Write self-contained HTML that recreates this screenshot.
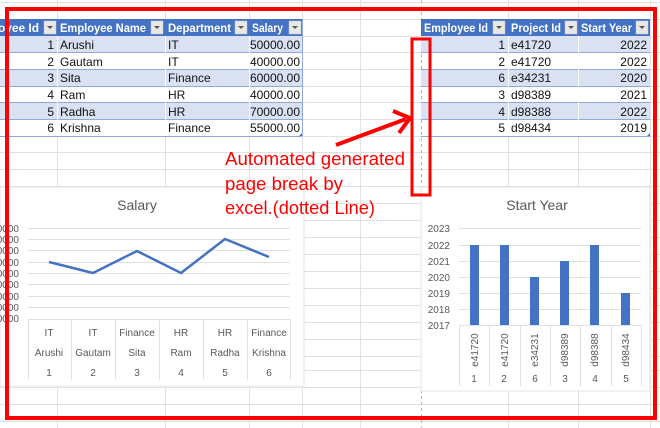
<!DOCTYPE html>
<html><head><meta charset="utf-8"><style>
html,body{margin:0;padding:0;background:#fff;width:660px;height:428px;overflow:hidden}
svg{display:block;font-family:"Liberation Sans",sans-serif}
</style></head><body>
<svg width="660" height="428" viewBox="0 0 660 428" xmlns="http://www.w3.org/2000/svg">
<rect width="660" height="428" fill="#fff"/>
<g stroke="#e1e1e1" stroke-width="1">
<line x1="0" y1="2.5" x2="660" y2="2.5"/>
<line x1="0" y1="19.5" x2="660" y2="19.5"/>
<line x1="0" y1="36.5" x2="660" y2="36.5"/>
<line x1="0" y1="52.5" x2="660" y2="52.5"/>
<line x1="0" y1="69.5" x2="660" y2="69.5"/>
<line x1="0" y1="86.5" x2="660" y2="86.5"/>
<line x1="0" y1="102.5" x2="660" y2="102.5"/>
<line x1="0" y1="119.5" x2="660" y2="119.5"/>
<line x1="0" y1="136.5" x2="660" y2="136.5"/>
<line x1="0" y1="152.5" x2="660" y2="152.5"/>
<line x1="0" y1="169.5" x2="660" y2="169.5"/>
<line x1="0" y1="186.5" x2="660" y2="186.5"/>
<line x1="0" y1="203.5" x2="660" y2="203.5"/>
<line x1="0" y1="220.5" x2="660" y2="220.5"/>
<line x1="0" y1="237.5" x2="660" y2="237.5"/>
<line x1="0" y1="254.5" x2="660" y2="254.5"/>
<line x1="0" y1="271.5" x2="660" y2="271.5"/>
<line x1="0" y1="288.5" x2="660" y2="288.5"/>
<line x1="0" y1="305.5" x2="660" y2="305.5"/>
<line x1="0" y1="322.5" x2="660" y2="322.5"/>
<line x1="0" y1="339.5" x2="660" y2="339.5"/>
<line x1="0" y1="356.5" x2="660" y2="356.5"/>
<line x1="0" y1="370.5" x2="660" y2="370.5"/>
<line x1="0" y1="387.5" x2="660" y2="387.5"/>
<line x1="0" y1="404.5" x2="660" y2="404.5"/>
<line x1="0" y1="421.5" x2="660" y2="421.5"/>
<line x1="57.5" y1="0" x2="57.5" y2="428"/>
<line x1="165.5" y1="0" x2="165.5" y2="428"/>
<line x1="249.5" y1="0" x2="249.5" y2="428"/>
<line x1="302.5" y1="0" x2="302.5" y2="428"/>
<line x1="360.5" y1="0" x2="360.5" y2="428"/>
<line x1="508.5" y1="0" x2="508.5" y2="428"/>
<line x1="578.5" y1="0" x2="578.5" y2="428"/>
<line x1="650.5" y1="0" x2="650.5" y2="428"/>
</g>
<line x1="421.5" y1="0" x2="421.5" y2="428" stroke="#b8b8b8" stroke-dasharray="3,3"/>

<rect x="0" y="19" width="302" height="17" fill="#4472C4"/>
<g fill="#D9E1F2"><rect x="0" y="36" width="302" height="16"/><rect x="0" y="69" width="302" height="17"/><rect x="0" y="102" width="302" height="17"/></g>
<g stroke="#8EA9DB" stroke-width="1"><line x1="0" y1="52.5" x2="302" y2="52.5"/><line x1="0" y1="69.5" x2="302" y2="69.5"/><line x1="0" y1="86.5" x2="302" y2="86.5"/><line x1="0" y1="102.5" x2="302" y2="102.5"/><line x1="0" y1="119.5" x2="302" y2="119.5"/><line x1="0" y1="136.5" x2="302" y2="136.5"/><line x1="302.5" y1="19" x2="302.5" y2="136"/></g>
<g stroke="#fff" stroke-width="1"><line x1="57.5" y1="36" x2="57.5" y2="136"/><line x1="165.5" y1="36" x2="165.5" y2="136"/><line x1="249.5" y1="36" x2="249.5" y2="136"/></g>
<g font-size="12" font-weight="bold" fill="#fff">
<text x="-2" y="32" textLength="41" lengthAdjust="spacingAndGlyphs">oyee Id</text><text x="60" y="32" textLength="86" lengthAdjust="spacingAndGlyphs">Employee Name</text><text x="168" y="32" textLength="63" lengthAdjust="spacingAndGlyphs">Department</text><text x="252" y="32" textLength="31" lengthAdjust="spacingAndGlyphs">Salary</text></g>
<g fill="#e8e8e8" stroke="#c8c8c8" stroke-width="0.5"><rect x="44" y="21" width="12" height="13"/><rect x="151" y="21" width="12" height="13"/><rect x="235" y="21" width="12" height="13"/><rect x="289" y="21" width="12" height="13"/></g>
<g fill="#555"><path d="M47 26h6l-3 3z"/><path d="M154 26h6l-3 3z"/><path d="M238 26h6l-3 3z"/><path d="M292 26h6l-3 3z"/></g>
<g font-size="12" fill="#111">
<text x="54" y="49" text-anchor="end">1</text><text x="60" y="49">Arushi</text><text x="168" y="49">IT</text><text x="300" y="49" text-anchor="end">50000.00</text>
<text x="54" y="66" text-anchor="end">2</text><text x="60" y="66">Gautam</text><text x="168" y="66">IT</text><text x="300" y="66" text-anchor="end">40000.00</text>
<text x="54" y="82" text-anchor="end">3</text><text x="60" y="82">Sita</text><text x="168" y="82">Finance</text><text x="300" y="82" text-anchor="end">60000.00</text>
<text x="54" y="99" text-anchor="end">4</text><text x="60" y="99">Ram</text><text x="168" y="99">HR</text><text x="300" y="99" text-anchor="end">40000.00</text>
<text x="54" y="116" text-anchor="end">5</text><text x="60" y="116">Radha</text><text x="168" y="116">HR</text><text x="300" y="116" text-anchor="end">70000.00</text>
<text x="54" y="132" text-anchor="end">6</text><text x="60" y="132">Krishna</text><text x="168" y="132">Finance</text><text x="300" y="132" text-anchor="end">55000.00</text>
</g>
<path d="M299 136h3v-3z" fill="#4472C4"/>

<rect x="421" y="19" width="229" height="17" fill="#4472C4"/>
<g fill="#D9E1F2"><rect x="421" y="36" width="229" height="16"/><rect x="421" y="69" width="229" height="17"/><rect x="421" y="102" width="229" height="17"/></g>
<g stroke="#8EA9DB" stroke-width="1"><line x1="421" y1="52.5" x2="650" y2="52.5"/><line x1="421" y1="69.5" x2="650" y2="69.5"/><line x1="421" y1="86.5" x2="650" y2="86.5"/><line x1="421" y1="102.5" x2="650" y2="102.5"/><line x1="421" y1="119.5" x2="650" y2="119.5"/><line x1="421" y1="136.5" x2="650" y2="136.5"/></g>
<g stroke="#fff"><line x1="508.5" y1="36" x2="508.5" y2="136"/><line x1="578.5" y1="36" x2="578.5" y2="136"/></g>
<g font-size="12" font-weight="bold" fill="#fff"><text x="424" y="32" textLength="64" lengthAdjust="spacingAndGlyphs">Employee Id</text><text x="511" y="32" textLength="50" lengthAdjust="spacingAndGlyphs">Project Id</text><text x="581" y="32" textLength="51" lengthAdjust="spacingAndGlyphs">Start Year</text></g>
<g fill="#e8e8e8" stroke="#c8c8c8" stroke-width="0.5"><rect x="493" y="21" width="12" height="13"/><rect x="565" y="21" width="12" height="13"/><rect x="636" y="21" width="12" height="13"/></g>
<g fill="#555"><path d="M496 26h6l-3 3z"/><path d="M568 26h6l-3 3z"/><path d="M639 26h6l-3 3z"/></g>
<g font-size="12" fill="#111">
<text x="505" y="49" text-anchor="end">1</text><text x="511" y="49">e41720</text><text x="647" y="49" text-anchor="end">2022</text>
<text x="505" y="66" text-anchor="end">2</text><text x="511" y="66">e41720</text><text x="647" y="66" text-anchor="end">2022</text>
<text x="505" y="82" text-anchor="end">6</text><text x="511" y="82">e34231</text><text x="647" y="82" text-anchor="end">2020</text>
<text x="505" y="99" text-anchor="end">3</text><text x="511" y="99">d98389</text><text x="647" y="99" text-anchor="end">2021</text>
<text x="505" y="116" text-anchor="end">4</text><text x="511" y="116">d98388</text><text x="647" y="116" text-anchor="end">2022</text>
<text x="505" y="132" text-anchor="end">5</text><text x="511" y="132">d98434</text><text x="647" y="132" text-anchor="end">2019</text>
</g>
<path d="M647 136h3v-3z" fill="#4472C4"/>

<rect x="0" y="187" width="304" height="199" fill="#fff" stroke="#e4e4e4"/>
<text x="137" y="210" font-size="14" fill="#595959" text-anchor="middle">Salary</text>
<g stroke="#e0e0e0"><line x1="28" y1="228.5" x2="290" y2="228.5"/><line x1="28" y1="239.5" x2="290" y2="239.5"/><line x1="28" y1="250.5" x2="290" y2="250.5"/><line x1="28" y1="262.5" x2="290" y2="262.5"/><line x1="28" y1="273.5" x2="290" y2="273.5"/><line x1="28" y1="284.5" x2="290" y2="284.5"/><line x1="28" y1="296.5" x2="290" y2="296.5"/><line x1="28" y1="307.5" x2="290" y2="307.5"/>
<line x1="28" y1="319.5" x2="290" y2="319.5"/>
<line x1="28.5" y1="319" x2="28.5" y2="380"/><line x1="71.5" y1="319" x2="71.5" y2="380"/><line x1="115.5" y1="319" x2="115.5" y2="380"/><line x1="159.5" y1="319" x2="159.5" y2="380"/><line x1="203.5" y1="319" x2="203.5" y2="380"/><line x1="247.5" y1="319" x2="247.5" y2="380"/><line x1="290.5" y1="319" x2="290.5" y2="380"/></g>
<g font-size="10" fill="#595959" text-anchor="end"><text x="19" y="232">0000</text><text x="19" y="243">0000</text><text x="19" y="254">0000</text><text x="19" y="266">0000</text><text x="19" y="277">0000</text><text x="19" y="288">0000</text><text x="19" y="300">0000</text><text x="19" y="311">0000</text><text x="19" y="322">0000</text></g>
<polyline points="49,262 93,273 137,251 181,273 225,239 269,257" fill="none" stroke="#4472C4" stroke-width="2.5" stroke-linejoin="round"/>
<g font-size="10" fill="#595959" text-anchor="middle">
<text x="49" y="336">IT</text><text x="93" y="336">IT</text><text x="137" y="336">Finance</text><text x="181" y="336">HR</text><text x="225" y="336">HR</text><text x="269" y="336">Finance</text>
<text x="49" y="356">Arushi</text><text x="93" y="356">Gautam</text><text x="137" y="356">Sita</text><text x="181" y="356">Ram</text><text x="225" y="356">Radha</text><text x="269" y="356">Krishna</text>
<text x="49" y="376">1</text><text x="93" y="376">2</text><text x="137" y="376">3</text><text x="181" y="376">4</text><text x="225" y="376">5</text><text x="269" y="376">6</text></g>

<rect x="421" y="187" width="229" height="204" fill="#fff" stroke="#e4e4e4"/>
<text x="537" y="210" font-size="14" fill="#595959" text-anchor="middle">Start Year</text>
<g stroke="#e0e0e0"><line x1="459" y1="228.5" x2="641" y2="228.5"/><line x1="459" y1="245.5" x2="641" y2="245.5"/><line x1="459" y1="261.5" x2="641" y2="261.5"/><line x1="459" y1="277.5" x2="641" y2="277.5"/><line x1="459" y1="293.5" x2="641" y2="293.5"/><line x1="459" y1="309.5" x2="641" y2="309.5"/><line x1="459" y1="325.5" x2="641" y2="325.5"/>
<line x1="459.5" y1="325" x2="459.5" y2="386"/><line x1="489.5" y1="325" x2="489.5" y2="386"/><line x1="520.5" y1="325" x2="520.5" y2="386"/><line x1="550.5" y1="325" x2="550.5" y2="386"/><line x1="580.5" y1="325" x2="580.5" y2="386"/><line x1="611.5" y1="325" x2="611.5" y2="386"/><line x1="641.5" y1="325" x2="641.5" y2="386"/></g>
<g font-size="10" fill="#595959" text-anchor="end"><text x="450" y="232">2023</text><text x="450" y="249">2022</text><text x="450" y="265">2021</text><text x="450" y="281">2020</text><text x="450" y="297">2019</text><text x="450" y="313">2018</text><text x="450" y="329">2017</text></g>
<g fill="#4472C4"><rect x="470" y="245" width="9" height="80"/><rect x="500" y="245" width="9" height="80"/><rect x="530" y="277" width="9" height="48"/><rect x="560" y="261" width="9" height="64"/><rect x="590" y="245" width="9" height="80"/><rect x="621" y="293" width="9" height="32"/></g>
<g font-size="10" fill="#595959" text-anchor="middle">
<text transform="translate(478,350) rotate(-90)">e41720</text><text transform="translate(508,350) rotate(-90)">e41720</text><text transform="translate(538,350) rotate(-90)">e34231</text><text transform="translate(568,350) rotate(-90)">d98389</text><text transform="translate(598,350) rotate(-90)">d98388</text><text transform="translate(629,350) rotate(-90)">d98434</text>
<text x="474" y="382">1</text><text x="504" y="382">2</text><text x="535" y="382">6</text><text x="565" y="382">3</text><text x="595" y="382">4</text><text x="626" y="382">5</text></g>

<rect x="7" y="9" width="648" height="409" fill="none" stroke="#ff0000" stroke-width="4"/>
<rect x="412" y="39" width="18" height="156" fill="none" stroke="#ff0000" stroke-width="3"/>
<line x1="336" y1="145" x2="406" y2="119" stroke="#ff0000" stroke-width="4"/>
<path d="M393 111 L410 118 L399 133" fill="none" stroke="#ff0000" stroke-width="4"/>
<g font-size="18" fill="#ff0000"><text x="225" y="165" textLength="180" lengthAdjust="spacingAndGlyphs">Automated generated</text><text x="225" y="190" textLength="118" lengthAdjust="spacingAndGlyphs">page break by</text><text x="225" y="214" textLength="150" lengthAdjust="spacingAndGlyphs">excel.(dotted Line)</text></g>
</svg>
</body></html>
